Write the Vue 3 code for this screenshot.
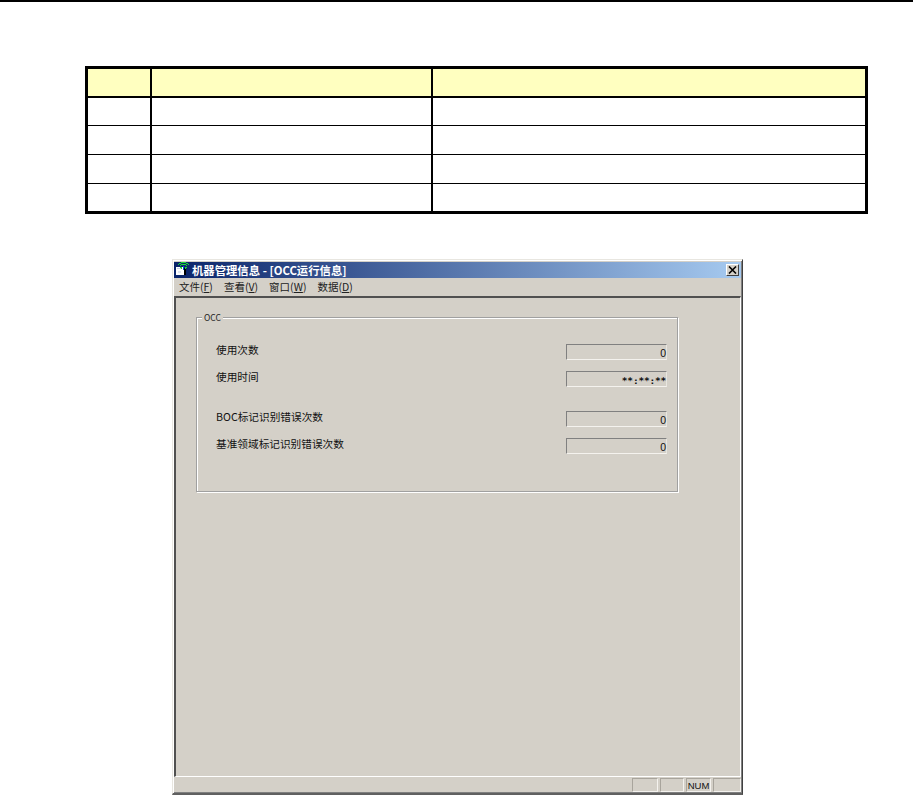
<script setup>
const rows = [0, 1, 2, 3, 4]
const menus = [
  { label: '文件', key: 'F' },
  { label: '查看', key: 'V' },
  { label: '窗口', key: 'W' },
  { label: '数据', key: 'D' },
]
const primary = [
  { label: '使用次数', value: '0' },
  { label: '使用时间', value: '**:**:**' },
]
const secondary = [
  { label: 'BOC标记识别错误次数', value: '0' },
  { label: '基准领域标记识别错误次数', value: '0' },
]
const panes = [26, 24, 25, 28]
</script>

<template>
  <div class="page">
    <div class="spec-table">
      <template v-for="r in rows" :key="r">
        <div class="cell col1" :class="'row' + r"></div>
        <div class="cell col2" :class="'row' + r"></div>
        <div class="cell col3" :class="'row' + r"></div>
      </template>
    </div>

    <div class="window">
      <div class="titlebar">
        <svg class="app-icon" width="16" height="16" viewBox="0 0 16 16" shape-rendering="crispEdges">
          <path d="M1 5h8v8H1z" fill="#fff" />
          <path d="M2 6h5v1H2z" fill="#c8d4e8" />
          <path d="M9 6h2v7H9z" fill="#000" />
          <path d="M3 9h3v2H3z" fill="#dfe6f2" />
          <path d="M6 .5h5M4 1.500h2M11 1.500h2M3 2.500h1M13 2.500h1M6 2.500h5M5 3.500h1M11 3.500h1M5 5.500h2M10 5.500h2M6 6.500h1M10 6.500h1" stroke="#18e030" stroke-width="1" fill="none" />
          <path d="M8 4h1v4H8z" fill="#0050e0" />
        </svg>
        <span class="title-text">机器管理信息 - [OCC运行信息]</span>
        <button class="close" type="button">
          <svg width="9" height="8" viewBox="0 0 9 8">
            <path d="M1 .5l7 7M8 .5l-7 7" stroke="#000" stroke-width="1.600" fill="none" />
          </svg>
        </button>
      </div>

      <div class="menubar">
        <span v-for="m in menus" :key="m.key" class="menu-item">{{ m.label }}(<u>{{ m.key }}</u>)</span>
      </div>

      <div class="client">
        <div class="group">
          <span class="legend">OCC</span>
          <div class="field-block first">
            <div v-for="f in primary" :key="f.label" class="field-row">
              <span class="field-label">{{ f.label }}</span>
              <span class="field-value" :class="{ 'time-value': f.value.includes(':') }">{{ f.value }}</span>
            </div>
          </div>
          <div class="field-block second">
            <div v-for="f in secondary" :key="f.label" class="field-row">
              <span class="field-label">{{ f.label }}</span>
              <span class="field-value">{{ f.value }}</span>
            </div>
          </div>
        </div>
      </div>

      <div class="statusbar">
        <span
          v-for="(w, i) in panes"
          :key="i"
          class="pane"
          :style="{ width: w + 'px' }"
        >{{ i === 2 ? 'NUM' : '' }}</span>
      </div>
    </div>
  </div>
</template>

<style>
html, body {
  margin: 0;
  background: #fff;
}
</style>

<style scoped>
.page {
  width: 913px;
  height: 795px;
  overflow: hidden;
  box-sizing: border-box;
  border-top: 2px solid #000;
  background: #fff;
  font-family: "Noto Sans CJK SC", "Liberation Sans", sans-serif;
}

.spec-table {
  display: grid;
  grid-template-columns: 64px 281px 1fr;
  grid-template-rows: 29px 28px 29px 29px 27px;
  box-sizing: border-box;
  width: 783px;
  height: 148px;
  margin: 64px 0 0 85px;
  border: 3px solid #000;
}

.cell {
  box-sizing: border-box;
  border-bottom: 1px solid #000;
}
.col1, .col2 {
  border-right: 2px solid #000;
}
.row0 {
  background: #ffffc0;
  border-bottom-width: 2px;
}
.row4 {
  border-bottom: 0;
}

.window {
  display: flex;
  flex-direction: column;
  box-sizing: border-box;
  width: 571px;
  height: 536px;
  margin: 45px 0 0 172px;
  padding: 2px 1px 0 1px;
  background: #d4d0c8;
  border-top: 1px solid #e8e6e0;
  border-left: 1px solid #e8e6e0;
  border-right: 1px solid #404040;
  border-bottom: 2px solid #606060;
  box-shadow: inset 1px 1px 0 #fff, inset -1px -1px 0 #808080;
}

.titlebar {
  display: flex;
  align-items: center;
  height: 16px;
  flex: none;
  background: linear-gradient(90deg, #0a246a, #a6caf0);
  padding: 0 2px 0 1px;
}
.app-icon {
  flex: none;
}
.title-text {
  margin-left: 1px;
  color: #fff;
  font-size: 11.350px;
  font-weight: 700;
  line-height: 16px;
  white-space: nowrap;
}
.close {
  display: flex;
  align-items: center;
  justify-content: center;
  box-sizing: border-box;
  width: 13px;
  height: 12px;
  margin-left: auto;
  padding: 0;
  background: #d4d0c8;
  border: 1px solid;
  border-color: #fff #404040 #404040 #fff;
}

.menubar {
  display: flex;
  flex: none;
  gap: 11px;
  height: 18px;
  padding-left: 5px;
  color: #222;
  font-size: 10.500px;
  line-height: 18px;
}
.menu-item {
  white-space: nowrap;
}

.client {
  flex: 1;
  box-sizing: border-box;
  padding: 19px 0 0 20px;
  border-top: 2px solid #505050;
  border-left: 2px solid #505050;
  border-right: 1px solid #fff;
  border-bottom: 1px solid #fff;
}

.group {
  position: relative;
  box-sizing: border-box;
  width: 482px;
  height: 175px;
  border: 1px solid #a0a0a0;
  box-shadow: inset 1px 1px 0 #fff, 1px 1px 0 #fff;
}
.legend {
  position: absolute;
  top: -7px;
  left: 5px;
  padding: 0 2px;
  background: #d4d0c8;
  color: #222;
  font-size: 8.500px;
  line-height: 12px;
}

.field-block {
  display: flex;
  flex-direction: column;
  gap: 11px;
  padding: 0 10px 0 19px;
}
.first {
  margin-top: 26px;
}
.second {
  margin-top: 24px;
}
.field-row {
  display: flex;
  align-items: flex-start;
  justify-content: space-between;
  height: 16px;
}
.field-label {
  color: #111;
  font-size: 10.670px;
  line-height: 11px;
  white-space: nowrap;
}
.field-value {
  box-sizing: border-box;
  width: 101px;
  height: 16px;
  padding: 1px 0 0;
  text-align: right;
  color: #111;
  font-family: "Liberation Sans", sans-serif;
  font-size: 10.500px;
  line-height: 15px;
  border: 1px solid;
  border-color: #808080 #e8e6e0 #f4f2ee #808080;
}
.time-value {
  padding-top: 2px;
  font-family: "DejaVu Sans Mono", monospace;
  font-size: 9.500px;
  font-weight: 700;
  letter-spacing: -0.200px;
  line-height: 13px;
}

.statusbar {
  display: flex;
  flex: none;
  justify-content: flex-end;
  gap: 2px;
  height: 16px;
  box-sizing: border-box;
  padding: 1px 0;
}
.pane {
  box-sizing: border-box;
  height: 14px;
  color: #111;
  font-family: "Liberation Sans", sans-serif;
  font-size: 9.500px;
  line-height: 13px;
  text-align: center;
  border: 1px solid;
  border-color: #a8a49c #f4f2ee #f4f2ee #a8a49c;
}
</style>
